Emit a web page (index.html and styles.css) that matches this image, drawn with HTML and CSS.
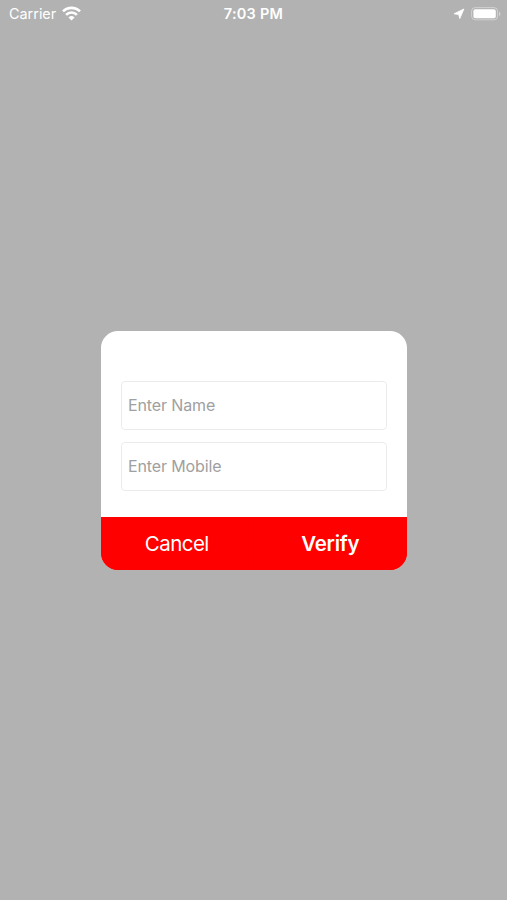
FILE: index.html
```html
<!DOCTYPE html>
<html lang="en">
<head>
    <meta charset="UTF-8">
    <meta name="viewport" content="width=device-width, initial-scale=1.0">
    <title>Verify</title>
    <link rel="stylesheet" href="styles.css">
</head>
<body>
    <div class="status-bar">
        <div class="left">
            <span class="carrier">Carrier</span>
            <svg class="wifi" width="19" height="15" viewBox="0 0 19 15">
                <path d="M1 5.4 A12 12 0 0 1 18 5.4" />
                <path d="M4.1 8.8 A7.6 7.6 0 0 1 14.9 8.8" />
                <path class="dot" d="M9.5 14.6 L6.5 11.5 A4.3 4.3 0 0 1 12.5 11.5 Z" />
            </svg>
        </div>
        <div class="time">7:03 PM</div>
        <div class="right">
            <svg class="location" width="12" height="12" viewBox="0 0 12 12">
                <path d="M10.9 1 L6.8 10.6 L5.7 6.6 L1.1 5.8 Z" />
            </svg>
            <svg class="battery" width="30" height="14" viewBox="0 0 30 14">
                <rect class="shell" x="0.6" y="0.6" width="26" height="12.2" rx="3.6" />
                <rect class="level" x="2.4" y="2.2" width="22.4" height="9" rx="2" />
                <path class="cap" d="M28 4.8 Q29.6 5.4 29.6 7 Q29.6 8.6 28 9.2 Z" />
            </svg>
        </div>
    </div>
    <div class="overlay">
        <form class="dialog">
            <div class="fields">
                <input type="text" placeholder="Enter Name">
                <input type="tel" placeholder="Enter Mobile">
            </div>
            <div class="buttons">
                <button type="button" class="cancel">Cancel</button>
                <button type="button" class="verify">Verify</button>
            </div>
        </form>
    </div>
</body>
</html>
```
FILE: styles.css
```css
* {
    box-sizing: border-box;
}

body {
    margin: 0;
    height: 900px;
    display: flex;
    flex-direction: column;
    background-color: #b2b2b2;
    font-family: Inter, "Liberation Sans", sans-serif;
    overflow: hidden;
}

.status-bar {
    display: grid;
    grid-template-columns: 1fr auto 1fr;
    align-items: center;
    height: 27px;
    padding: 0 6px 0 9px;
    color: white;
    font-size: 14.4px;
}

.left,
.right {
    display: flex;
    align-items: center;
}

.left {
    gap: 5.5px;
}

.right {
    justify-content: flex-end;
    gap: 6px;
}

.time {
    font-size: 14.5px;
    font-weight: 600;
    letter-spacing: 0.25px;
    margin-right: 3px;
}

.wifi path {
    fill: none;
    stroke: white;
    stroke-width: 2.6;
}

.wifi .dot {
    fill: white;
    stroke: none;
}

.location path {
    fill: white;
    stroke: white;
    stroke-width: 0.8;
    stroke-linejoin: round;
}

.level {
    fill: white;
}

.shell {
    fill: none;
    stroke: rgba(255, 255, 255, 0.4);
    stroke-width: 1;
}

.cap {
    fill: rgba(255, 255, 255, 0.4);
}

.overlay {
    flex: 1;
    display: flex;
    justify-content: center;
    align-items: flex-start;
    padding-top: 304px;
}

.dialog {
    width: 306px;
    background: white;
    border-radius: 17px;
    overflow: hidden;
}

.fields {
    display: flex;
    flex-direction: column;
    gap: 12px;
    padding: 50px 20px 26px;
}

.fields input {
    height: 49px;
    padding: 0 6px 1px 6.5px;
    border: 1px solid #ebebeb;
    border-radius: 4px;
    background: white;
    font-family: inherit;
    font-size: 16px;
    letter-spacing: -0.12px;
}

.fields input::placeholder {
    color: #a0a0a0;
}

.buttons {
    display: flex;
    height: 53px;
    background-color: red;
}

.buttons button {
    flex: 1;
    padding: 0;
    border: none;
    background-color: red;
    color: white;
    font-family: inherit;
    font-size: 20.5px;
    letter-spacing: -0.55px;
}

.buttons .cancel {
    border-right: 1px solid #fa0000;
}

.buttons .verify {
    font-weight: 600;
    letter-spacing: -0.25px;
}
```
